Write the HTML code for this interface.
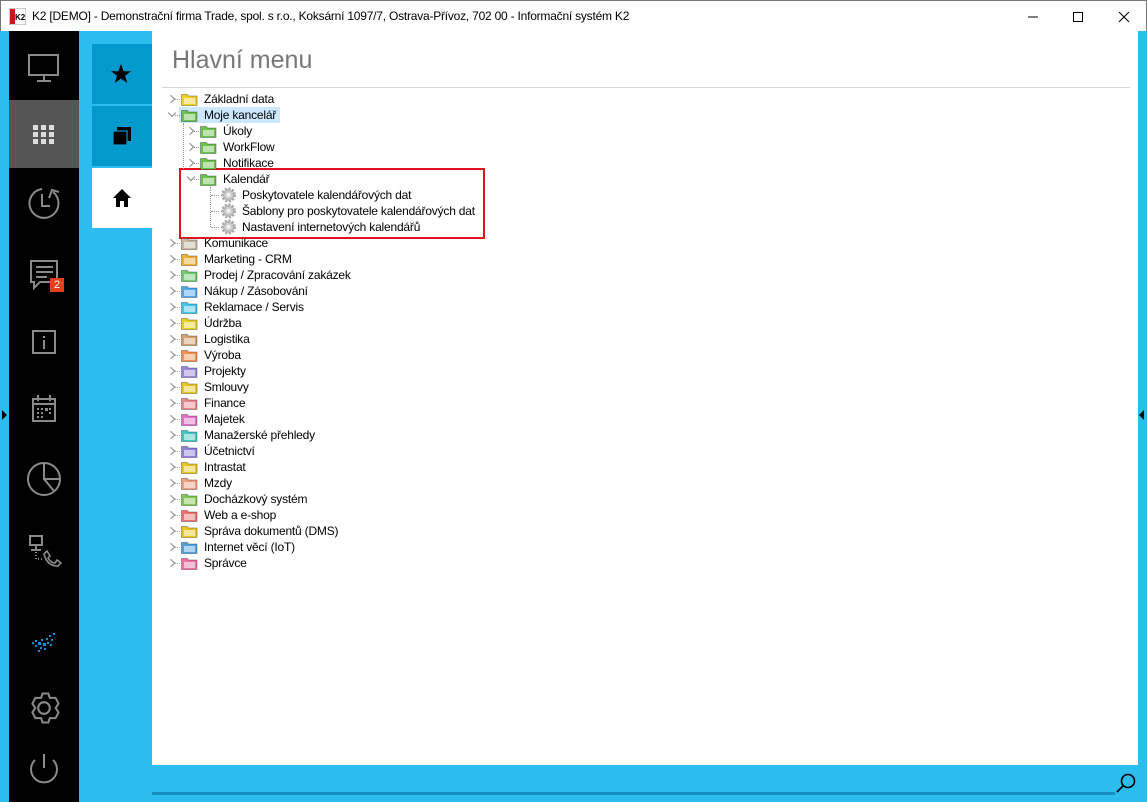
<!DOCTYPE html>
<html><head><meta charset="utf-8"><style>
*{margin:0;padding:0;box-sizing:border-box}
body{width:1147px;height:802px;position:relative;overflow:hidden;background:#2dbcee;font-family:"Segoe UI","Liberation Sans",sans-serif}
.abs{position:absolute}
#title{left:0;top:0;width:1147px;height:31px;background:#fff;border:1px solid #777;border-bottom:none}
#title .t{left:31px;top:8px;font-size:12px;color:#000;white-space:nowrap;letter-spacing:-0.22px}
#side{left:9px;top:31px;width:70px;height:771px;background:#000}
#content{left:152px;top:31px;width:986px;height:734px;background:#fff}
.row{position:absolute;height:16px;font-size:12px;line-height:16px;color:#000;white-space:nowrap;letter-spacing:-0.2px}
.chev{position:absolute;width:6px;height:6px;border-right:1.3px solid #888;border-bottom:1.3px solid #888}
</style></head><body>
<div id="title" class="abs">
 <svg class="abs" style="left:8px;top:7px" width="17" height="17"><rect width="17" height="17" fill="#fff" stroke="#999"/><rect x="1" y="1" width="5" height="15" fill="#c4161c"/><text x="6" y="12" font-size="8" font-weight="bold" font-family="Liberation Sans">K2</text></svg>
 <div class="t abs">K2 [DEMO] - Demonstrační firma Trade, spol. s r.o., Koksární 1097/7, Ostrava-Přívoz, 702 00 - Informační systém K2</div>
 <svg class="abs" style="left:1020px;top:8px" width="120" height="16"><line x1="7" y1="8" x2="17" y2="8" stroke="#000"/><rect x="52.5" y="3.5" width="9" height="9" fill="none" stroke="#000"/><path d="M118 3L128 13M128 3L118 13" stroke="#000" transform="translate(-20 0)"/></svg>
</div>
<div id="side" class="abs"></div>
<div class="abs" style="left:9px;top:100px;width:70px;height:68px;background:#555"></div>
<svg class="abs" style="left:9px;top:31px" width="70" height="771" fill="none" stroke="#8a8a8a" stroke-width="2">
 <rect x="20" y="24" width="29" height="20"/><line x1="35" y1="44" x2="35" y2="49"/><line x1="28" y1="50" x2="42" y2="50"/>
 <g fill="#ddd" stroke="none"><rect x="24" y="94" width="5" height="5"/><rect x="32" y="94" width="5" height="5"/><rect x="40" y="94" width="5" height="5"/><rect x="24" y="101" width="5" height="5"/><rect x="32" y="101" width="5" height="5"/><rect x="40" y="101" width="5" height="5"/><rect x="24" y="108" width="5" height="5"/><rect x="32" y="108" width="5" height="5"/><rect x="40" y="108" width="5" height="5"/></g>
 <path d="M44 161 A14.5 14.5 0 1 1 33 158"/><path d="M40 167 L43 159 L50 161"/><path d="M33 163 V175 H41"/>
 <path d="M22 230 H48 V251 H31 L25 257 V251 H22 Z"/><line x1="27" y1="236" x2="44" y2="236"/><line x1="27" y1="241" x2="44" y2="241"/><line x1="27" y1="246" x2="38" y2="246"/>
 <rect x="24" y="300" width="22" height="22"/><line x1="35" y1="305" x2="35" y2="307"/><line x1="35" y1="309" x2="35" y2="318"/>
 <rect x="24" y="368" width="22" height="22"/><line x1="24" y1="373" x2="46" y2="373"/><line x1="29" y1="364" x2="29" y2="370"/><line x1="41" y1="364" x2="41" y2="370"/>
 <g fill="#8a8a8a" stroke="none"><rect x="28" y="377" width="2" height="2"/><rect x="32" y="377" width="2" height="2"/><rect x="36" y="377" width="3" height="3"/><rect x="40" y="377" width="2" height="2"/><rect x="28" y="381" width="2" height="2"/><rect x="32" y="381" width="2" height="2"/><rect x="40" y="381" width="2" height="2"/><rect x="28" y="385" width="2" height="2"/><rect x="32" y="385" width="2" height="2"/></g>
 <circle cx="35" cy="448" r="16"/><path d="M35 432 V448 H51 M35 448 L45 460"/>
 <rect x="21" y="505" width="12" height="9"/><line x1="27" y1="514" x2="27" y2="518"/><line x1="22" y1="519" x2="32" y2="519"/><path d="M27 521 V528 H33" stroke-dasharray="1 2"/><path d="M38 520 L41 525 L39 527 Q42 532 46 532 L48 529 L52 532 L49 535 Q38 535 35 523 Z" stroke-width="1.6"/>
 <g transform="translate(35 677) scale(1.45) translate(-35 -687)" stroke-width="1.4"><path d="M27 684 l2-4 4 0 1 -3 4 0 1 3 4 0 2 4 -2 3 2 3 -2 4 -4 0 -1 3 -4 0 -1 -3 -4 0 -2 -4 2 -3z"/><circle cx="35" cy="687" r="4"/></g>
 <path d="M26 729 A13 13 0 1 0 44 729"/><line x1="35" y1="723" x2="35" y2="737"/>
</svg>
<div class="abs" style="left:50px;top:278px;width:14px;height:14px;background:#e0401c;color:#fff;font-size:11px;line-height:14px;text-align:center">2</div>
<svg class="abs" style="left:30px;top:630px" width="28" height="26"><g fill="#0a8fd8"><rect x="2" y="12" width="2" height="2"/><rect x="5" y="10" width="2" height="2"/><rect x="8" y="12" width="3" height="3"/><rect x="5" y="15" width="2" height="2"/><rect x="11" y="9" width="2" height="2"/><rect x="13" y="13" width="3" height="3"/><rect x="10" y="17" width="2" height="2"/><rect x="16" y="8" width="2" height="2"/><rect x="19" y="5" width="2" height="2"/><rect x="17" y="12" width="2" height="2"/><rect x="21" y="9" width="2" height="2"/><rect x="23" y="3" width="2" height="2"/><rect x="8" y="20" width="2" height="2"/><rect x="14" y="18" width="2" height="2"/><rect x="20" y="14" width="2" height="2"/></g></svg>
<div class="abs" style="left:2px;top:410px;width:0;height:0;border-left:5px solid #000;border-top:5px solid transparent;border-bottom:5px solid transparent"></div>
<div class="abs" style="left:1139px;top:410px;width:0;height:0;border-right:5px solid #000;border-top:5px solid transparent;border-bottom:5px solid transparent"></div>
<div class="abs" style="left:92px;top:44px;width:60px;height:60px;background:#0299cc"></div>
<div class="abs" style="left:92px;top:106px;width:60px;height:60px;background:#0299cc"></div>
<div class="abs" style="left:92px;top:168px;width:60px;height:60px;background:#fff"></div>
<svg class="abs" style="left:110px;top:63px" width="22" height="22"><path d="M11 1 L13.6 8.2 L21 8.2 L15 12.8 L17.3 20 L11 15.6 L4.7 20 L7 12.8 L1 8.2 L8.4 8.2Z"/></svg>
<svg class="abs" style="left:112px;top:126px" width="20" height="20"><rect x="5" y="1" width="14" height="14"/><rect x="1" y="5" width="14" height="14" fill="#000" stroke="#0299cc" stroke-width="1.2"/></svg>
<svg class="abs" style="left:112px;top:188px" width="20" height="20"><path d="M10 1 L19 10 L16 10 L16 19 L12 19 L12 13 L8 13 L8 19 L4 19 L4 10 L1 10Z"/></svg>
<div id="content" class="abs"></div>
<div class="abs" style="left:172px;top:46px;font-size:25px;color:#777;font-family:'Liberation Sans',sans-serif">Hlavní menu</div>
<div class="abs" style="left:162px;top:87px;width:968px;height:1px;background:#d8d8d8"></div>
<div class="abs" style="left:152px;top:792px;width:963px;height:3px;background:#1a8fbe"></div>
<svg class="abs" style="left:1114px;top:771px" width="24" height="24" fill="none" stroke="#000" stroke-width="1.6"><circle cx="14" cy="10" r="6.5"/><line x1="9.5" y1="14.5" x2="3" y2="21"/></svg>
<div class="abs" style="left:179px;top:107px;width:101px;height:16px;background:#cce8ff"></div>
<div class="abs" style="left:179px;top:168px;width:306px;height:71px;border:2px solid #e0141e"></div>
<div id="tree"></div>
<script>
var rows=[
[0,'Základní data','#f0d020',1],[0,'Moje kancelář','#6cc050',2],[1,'Úkoly','#6cc050',1],[1,'WorkFlow','#6cc050',1],[1,'Notifikace','#6cc050',1],[1,'Kalendář','#6cc050',2],
[2,'Poskytovatele kalendářových dat','g',0],[2,'Šablony pro poskytovatele kalendářových dat','g',0],[2,'Nastavení internetových kalendářů','g',0],
[0,'Komunikace','#c8b8a0',1],[0,'Marketing - CRM','#f0b030',1],[0,'Prodej / Zpracování zakázek','#70c870',1],[0,'Nákup / Zásobování','#50a8e8',1],[0,'Reklamace / Servis','#40c8e8',1],[0,'Údržba','#e8d020',1],[0,'Logistika','#d0a070',1],[0,'Výroba','#f89050',1],[0,'Projekty','#9888d8',1],[0,'Smlouvy','#e8c820',1],[0,'Finance','#e88890',1],[0,'Majetek','#e070c8',1],[0,'Manažerské přehledy','#40c8c0',1],[0,'Účetnictví','#9080d8',1],[0,'Intrastat','#e8c820',1],[0,'Mzdy','#f0a080',1],[0,'Docházkový systém','#80c850',1],[0,'Web a e-shop','#f07070',1],[0,'Správa dokumentů (DMS)','#e8c820',1],[0,'Internet věcí (IoT)','#50a0e0',1],[0,'Správce','#f070a0',1]];
var h='';
rows.forEach(function(r,i){
 var y=91+i*16, lv=r[0], ix=181+lv*19, tx=ix+23;
 if(lv==2){ix=220;tx=242;}
 if(r[3]==1) h+='<div class="chev" style="left:'+(ix-13)+'px;top:'+(y+5)+'px;transform:rotate(-45deg)"></div>';
 if(r[3]==2) h+='<div class="chev" style="left:'+(ix-12)+'px;top:'+(y+3)+'px;transform:rotate(45deg)"></div>';
 if(lv<2) h+='<div class="abs" style="left:'+(ix-6)+'px;top:'+(y+8)+'px;width:5px;border-top:1px dotted #999"></div>';
 else h+='<div class="abs" style="left:211px;top:'+(y+8)+'px;width:8px;border-top:1px dotted #999"></div>';
 if(r[2]=='g') h+='<svg class="abs" style="left:'+ix+'px;top:'+y+'px" width="17" height="16"><circle cx="8.5" cy="8" r="6" fill="#c8c8c8" stroke="#a8a8a8" stroke-width="3" stroke-dasharray="2 1.5"/><circle cx="8.5" cy="8" r="2.5" fill="#eee"/></svg>';
 else h+='<svg class="abs" style="left:'+ix+'px;top:'+(y+2)+'px" width="17" height="13"><path d="M0.5 1.5h6l1 1.5h8.5v9.5h-15.5z" fill="'+r[2]+'" stroke="rgba(0,0,0,.3)"/><rect x="3" y="5" width="11" height="6" fill="#fff" opacity=".55"/></svg>';
 h+='<div class="row" style="left:'+tx+'px;top:'+y+'px">'+r[1]+'</div>';
});
h+='<div class="abs" style="left:183px;top:123px;height:46px;border-left:1px dotted #999"></div>';
h+='<div class="abs" style="left:210px;top:187px;height:40px;border-left:1px dotted #999"></div>';
document.getElementById('tree').innerHTML=h;
</script>
</body></html>
